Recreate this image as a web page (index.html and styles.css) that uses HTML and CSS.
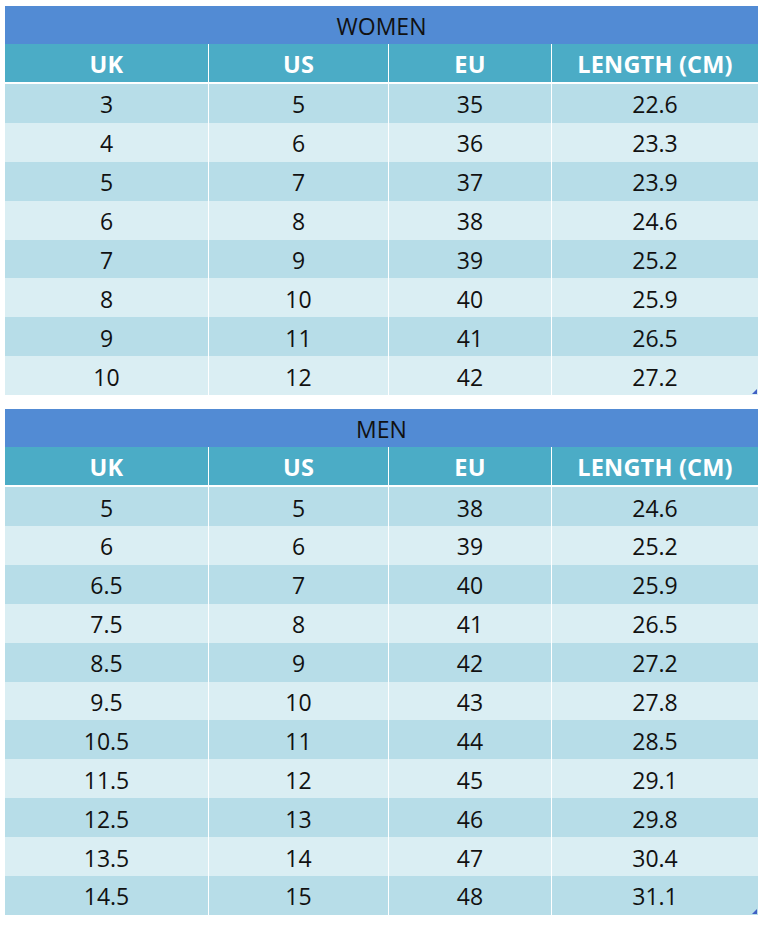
FILE: index.html
```html
<!DOCTYPE html>
<html>
<head>
<meta charset="utf-8">
<link rel="stylesheet" href="styles.css">
</head>
<body>
<div class="page">
  <div class="chart">
    <div class="title">WOMEN</div>
    <div class="row head"><div>UK</div><div>US</div><div>EU</div><div>LENGTH (CM)</div></div>
    <div class="row dark"><div>3</div><div>5</div><div>35</div><div>22.6</div></div>
    <div class="row light"><div>4</div><div>6</div><div>36</div><div>23.3</div></div>
    <div class="row dark"><div>5</div><div>7</div><div>37</div><div>23.9</div></div>
    <div class="row light"><div>6</div><div>8</div><div>38</div><div>24.6</div></div>
    <div class="row dark"><div>7</div><div>9</div><div>39</div><div>25.2</div></div>
    <div class="row light"><div>8</div><div>10</div><div>40</div><div>25.9</div></div>
    <div class="row dark"><div>9</div><div>11</div><div>41</div><div>26.5</div></div>
    <div class="row light"><div>10</div><div>12</div><div>42</div><div>27.2</div></div>
    <span class="handle"></span>
  </div>
  <div class="chart">
    <div class="title">MEN</div>
    <div class="row head"><div>UK</div><div>US</div><div>EU</div><div>LENGTH (CM)</div></div>
    <div class="row dark"><div>5</div><div>5</div><div>38</div><div>24.6</div></div>
    <div class="row light"><div>6</div><div>6</div><div>39</div><div>25.2</div></div>
    <div class="row dark"><div>6.5</div><div>7</div><div>40</div><div>25.9</div></div>
    <div class="row light"><div>7.5</div><div>8</div><div>41</div><div>26.5</div></div>
    <div class="row dark"><div>8.5</div><div>9</div><div>42</div><div>27.2</div></div>
    <div class="row light"><div>9.5</div><div>10</div><div>43</div><div>27.8</div></div>
    <div class="row dark"><div>10.5</div><div>11</div><div>44</div><div>28.5</div></div>
    <div class="row light"><div>11.5</div><div>12</div><div>45</div><div>29.1</div></div>
    <div class="row dark"><div>12.5</div><div>13</div><div>46</div><div>29.8</div></div>
    <div class="row light"><div>13.5</div><div>14</div><div>47</div><div>30.4</div></div>
    <div class="row dark"><div>14.5</div><div>15</div><div>48</div><div>31.1</div></div>
    <span class="handle"></span>
  </div>
</div>
</body>
</html>
```
FILE: styles.css
```css
html, body {
  margin: 0;
  padding: 0;
  background: #ffffff;
}
.page {
  padding: 6px 10px 0 5px;
  display: flex;
  flex-direction: column;
  gap: 14px;
  font-family: "Open Sans", "Liberation Sans", sans-serif;
}
.chart {
  position: relative;
  width: 753px;
  display: flex;
  flex-direction: column;
}
.title {
  height: 38px;
  background: #528bd4;
  color: #111;
  font-size: 23px;
  display: flex;
  align-items: center;
  justify-content: center;
  padding-top: 2px;
  box-sizing: border-box;
}
.row {
  display: grid;
  grid-template-columns: 203px 180px 163px 207px;
  height: 38.9px;
}
.row > div {
  display: flex;
  align-items: center;
  justify-content: center;
  font-size: 23px;
  color: #111;
  border-left: 1px solid #ffffff;
  padding-top: 2px;
}
.row > div:first-child {
  border-left: none;
}
.head {
  height: 38px;
  background: #4bacc6;
  border-bottom: 2px solid #ffffff;
}
.head > div {
  color: #ffffff;
  font-weight: 700;
  font-size: 23.5px;
  letter-spacing: 0.2px;
}
.dark {
  background: #b7dde8;
}
.light {
  background: #daeef3;
}
.handle {
  position: absolute;
  right: 1px;
  bottom: 1px;
  width: 0;
  height: 0;
  border-left: 5px solid transparent;
  border-bottom: 5px solid #3f5fc4;
}
```
